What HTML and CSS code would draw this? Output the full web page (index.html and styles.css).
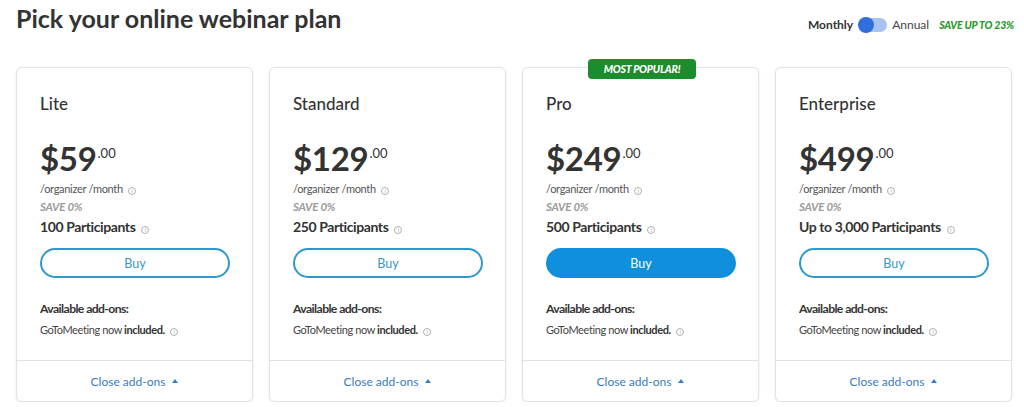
FILE: index.html
```html
<!DOCTYPE html>
<html lang="en">
<head>
<meta charset="utf-8">
<title>Pick your online webinar plan</title>
<link rel="stylesheet" href="styles.css">
</head>
<body>
<div class="page">
  <header class="header">
    <h1 class="title">Pick your online webinar plan</h1>
    <div class="billing">
      <span class="bill-monthly">Monthly</span>
      <span class="switch"><span class="knob"></span></span>
      <span class="bill-annual">Annual</span>
      <span class="save-up">SAVE UP TO 23%</span>
    </div>
  </header>

  <div class="plans">
    <div class="card">
      <div class="card-body">
        <div class="plan-name">Lite</div>
        <div class="price"><span class="amount">$59</span><span class="cents">.00</span></div>
        <div class="per">/organizer /month <span class="info">i</span></div>
        <div class="save">SAVE 0%</div>
        <div class="participants">100 Participants <span class="info">i</span></div>
        <button class="buy">Buy</button>
        <div class="addons-title">Available add-ons:</div>
        <div class="addons-text">GoToMeeting now <b>included.</b> <span class="info">i</span></div>
      </div>
      <div class="card-foot">Close add-ons <span class="caret"></span></div>
    </div>

    <div class="card">
      <div class="card-body">
        <div class="plan-name">Standard</div>
        <div class="price"><span class="amount">$129</span><span class="cents">.00</span></div>
        <div class="per">/organizer /month <span class="info">i</span></div>
        <div class="save">SAVE 0%</div>
        <div class="participants">250 Participants <span class="info">i</span></div>
        <button class="buy">Buy</button>
        <div class="addons-title">Available add-ons:</div>
        <div class="addons-text">GoToMeeting now <b>included.</b> <span class="info">i</span></div>
      </div>
      <div class="card-foot">Close add-ons <span class="caret"></span></div>
    </div>

    <div class="card popular">
      <div class="badge">MOST POPULAR!</div>
      <div class="card-body">
        <div class="plan-name">Pro</div>
        <div class="price"><span class="amount">$249</span><span class="cents">.00</span></div>
        <div class="per">/organizer /month <span class="info">i</span></div>
        <div class="save">SAVE 0%</div>
        <div class="participants">500 Participants <span class="info">i</span></div>
        <button class="buy buy-primary">Buy</button>
        <div class="addons-title">Available add-ons:</div>
        <div class="addons-text">GoToMeeting now <b>included.</b> <span class="info">i</span></div>
      </div>
      <div class="card-foot">Close add-ons <span class="caret"></span></div>
    </div>

    <div class="card">
      <div class="card-body">
        <div class="plan-name">Enterprise</div>
        <div class="price"><span class="amount">$499</span><span class="cents">.00</span></div>
        <div class="per">/organizer /month <span class="info">i</span></div>
        <div class="save">SAVE 0%</div>
        <div class="participants">Up to 3,000 Participants <span class="info">i</span></div>
        <button class="buy">Buy</button>
        <div class="addons-title">Available add-ons:</div>
        <div class="addons-text">GoToMeeting now <b>included.</b> <span class="info">i</span></div>
      </div>
      <div class="card-foot">Close add-ons <span class="caret"></span></div>
    </div>
  </div>
</div>
</body>
</html>
```

FILE: styles.css
```css
* { box-sizing: border-box; }
html, body { margin: 0; padding: 0; background: #fff; }
body {
  font-family: Lato, "Open Sans", "Liberation Sans", sans-serif;
  color: #333;
}
.page { padding: 0 10px 0 16px; }

.header {
  display: flex;
  justify-content: space-between;
  align-items: flex-start;
  height: 67px;
}
.title {
  margin: 2px 0 0;
  font-size: 25px;
  line-height: 32px;
  font-weight: 700;
  color: #333;
}
.billing {
  display: flex;
  align-items: center;
  margin-top: 17px;
  font-size: 12px;
}
.bill-monthly { font-weight: 700; color: #333; }
.switch {
  position: relative;
  display: inline-block;
  width: 28px;
  height: 14px;
  margin: 0 5px 0 6px;
  border-radius: 7px;
  background: #a6c3f2;
}
.knob {
  position: absolute;
  left: -1px;
  top: -1px;
  width: 16px;
  height: 16px;
  border-radius: 50%;
  background: #2f6edb;
}
.bill-annual { color: #444; }
.save-up {
  margin-left: 10px;
  font-size: 10.5px;
  font-weight: 900;
  font-style: italic;
  color: #2a9a2a;
  letter-spacing: -0.2px;
}

.plans {
  display: grid;
  grid-template-columns: repeat(4, 237px);
  column-gap: 16px;
}
.card {
  position: relative;
  height: 335px;
  display: flex;
  flex-direction: column;
  border: 1px solid #e2e2e2;
  border-radius: 6px;
  background: #fff;
  box-shadow: 0 1px 3px rgba(0, 0, 0, 0.08);
}
.badge {
  position: absolute;
  top: -9px;
  left: 65px;
  width: 108px;
  height: 20px;
  line-height: 20px;
  border-radius: 4px;
  background: #1b8d2c;
  color: #fff;
  text-align: center;
  font-size: 10.5px;
  font-weight: 900;
  font-style: italic;
  letter-spacing: -0.2px;
}
.card-body {
  flex: 1;
  padding: 26px 23px 0;
  display: flex;
  flex-direction: column;
  align-items: flex-start;
}
.plan-name {
  font-size: 17px;
  line-height: 20px;
  font-weight: 500;
  color: #333;
}
.price {
  margin-top: 24px;
  display: flex;
  align-items: flex-start;
  height: 40px;
}
.amount {
  font-size: 33px;
  line-height: 40px;
  font-weight: 700;
  color: #333;
  letter-spacing: -0.3px;
}
.cents {
  font-size: 13px;
  line-height: 13px;
  margin-top: 9px;
  margin-left: 1px;
  color: #333;
}
.per {
  margin-top: 3px;
  font-size: 11px;
  line-height: 16px;
  color: #555;
  letter-spacing: -0.3px;
}
.save {
  margin-top: 2px;
  font-size: 11.4px;
  line-height: 16px;
  font-weight: 700;
  font-style: italic;
  color: #9a9a9a;
  letter-spacing: -0.2px;
}
.participants {
  margin-top: 2px;
  font-size: 14px;
  line-height: 20px;
  font-weight: 700;
  color: #333;
  letter-spacing: -0.4px;
}
.info {
  display: inline-block;
  width: 8px;
  height: 8px;
  margin-left: 3px;
  border: 1px solid #b0b0b0;
  border-radius: 50%;
  color: #b0b0b0;
  font-size: 6px;
  line-height: 6px;
  text-align: center;
  font-weight: 400;
  font-style: normal;
  letter-spacing: 0;
  vertical-align: 0;
}
.buy {
  margin-top: 11px;
  width: 190px;
  height: 30px;
  border: 2px solid #2b98cf;
  border-radius: 15px;
  background: #fff;
  color: #3595d0;
  font-family: inherit;
  font-size: 12.5px;
  cursor: pointer;
}
.buy-primary {
  background: #0f8fdc;
  border-color: #0f8fdc;
  color: #fff;
}
.addons-title {
  margin-top: 22px;
  font-size: 12.2px;
  line-height: 18px;
  font-weight: 700;
  color: #333;
  letter-spacing: -0.6px;
}
.addons-text {
  margin-top: 4px;
  font-size: 11px;
  line-height: 16px;
  color: #444;
  letter-spacing: -0.4px;
}
.addons-text b { font-weight: 700; color: #333; }
.card-foot {
  height: 41px;
  border-top: 1px solid #e2e2e2;
  display: flex;
  align-items: center;
  justify-content: center;
  font-size: 12px;
  color: #3b7ac4;
}
.caret {
  display: inline-block;
  width: 0;
  height: 0;
  margin-left: 7px;
  border-left: 3.5px solid transparent;
  border-right: 3.5px solid transparent;
  border-bottom: 4px solid #3b7ac4;
}
```
